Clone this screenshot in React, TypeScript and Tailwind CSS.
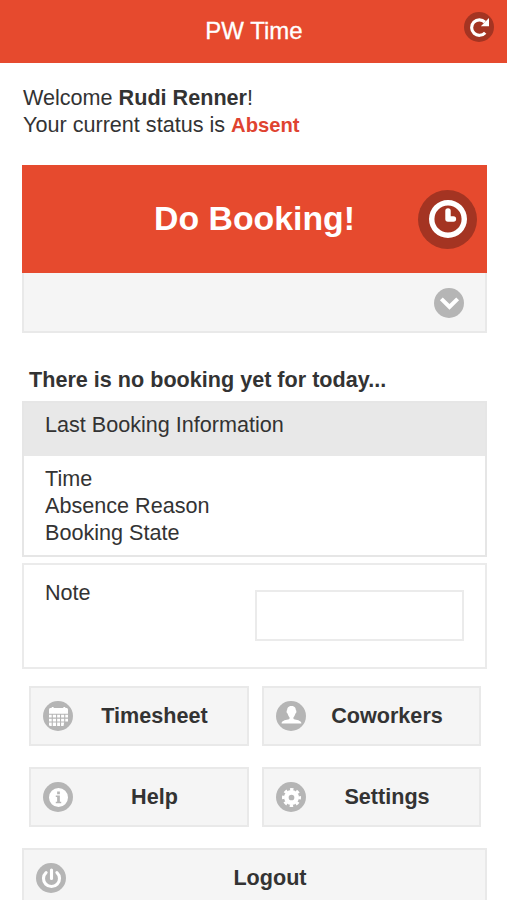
import React from 'react';

type IconName = 'refresh' | 'clock' | 'down' | 'calendar' | 'user' | 'info' | 'gear' | 'power';

const glyphs: Record<IconName, React.ReactNode> = {
  refresh: (
    <>
      <path d="M11.2 10.8A5.7 5.7 0 1 1 11 3.1" fill="none" stroke="currentColor" strokeWidth="2.3" />
      <path d="M14 0V6H8Z" />
    </>
  ),
  clock: (
    <path d="M7 0a7 7 0 1 0 0 14A7 7 0 0 0 7 0zM7 12A5 5 0 1 1 7 2a5 5 0 0 1 0 10zM9 6H8V4a1 1 0 0 0-2 0v3a1 1 0 0 0 1 1h2a1 1 0 0 0 0-2z" />
  ),
  down: <path d="M11.95 2.5 7 7.4 2.05 2.5 -0.05 4.6 7 11.6 14.05 4.6Z" />,
  calendar: (
    <path
      fillRule="evenodd"
      d="M0 2C0 1.100.5.7 1.200.7H2V0h1.400v.7h7.200V0H12v.7h.8c.7 0 1.200.5 1.200 1.300V5H0zM0 5.800h2v2H0zM2.800 5.800h2.400v2H2.800zM6 5.800h2.100v2H6zM8.900 5.800h2.300v2H8.900zM12 5.800h2v2h-2zM0 8.600h2v2H0zM2.800 8.600h2.400v2H2.800zM6 8.600h2.100v2H6zM8.900 8.600h2.300v2H8.900zM12 8.600h2v2h-2zM0 11.400h2V14H1a1 1 0 0 1-1-1zM2.800 11.400h2.400V14H2.800zM6 11.400h2.100V14H6zM8.900 11.400h2.300L10.700 14H8.900z"
    />
  ),
  user: (
    <path d="M8.9 9.1c-.5-.1-.5-1.4-.5-1.4s1.2-1.2 1.5-2.9c.8 0 1-1.9.3-2.5C10.2 1.3 9.8-.7 7-.7S3.8 1.3 3.8 2.3c-.7.6-.5 2.5.3 2.5.3 1.7 1.5 2.9 1.5 2.9s0 1.3-.5 1.4C3.6 9.4-.3 10-.3 12.1h14.6c0-2.1-3.9-2.7-5.4-3z" />
  ),
  info: (
    <path
      fillRule="evenodd"
      d="M7 0a7 7 0 1 0 0 14A7 7 0 0 0 7 0zM6 2.6h2v2H6zM5 5.6h3v4.6h1v1H5v-1h1V6.6H5z"
    />
  ),
  gear: (
    <g fill="none" stroke="currentColor">
      <circle cx="7" cy="7" r="3.8" strokeWidth="3.4" />
      <circle cx="7" cy="7" r="6" strokeWidth="2" strokeDasharray="2.5 2.212" strokeDashoffset="1.25" />
    </g>
  ),
  power: (
    <g fill="none" stroke="currentColor" strokeWidth="2.3" strokeLinecap="round">
      <path d="M7 0.8v6.2" />
      <path d="M3 2.7A5.9 5.9 0 1 0 11 2.7" />
    </g>
  ),
};

const Glyph: React.FC<{ name: IconName; className: string }> = ({ name, className }) => (
  <svg viewBox="0 0 14 14" fill="currentColor" className={`overflow-visible ${className}`}>
    {glyphs[name]}
  </svg>
);

const Disc: React.FC<{ name: IconName }> = ({ name }) => (
  <span className="flex size-[30px] shrink-0 items-center justify-center rounded-full bg-[#b5b5b5] text-white">
    <Glyph name={name} className="size-[19px]" />
  </span>
);

const MenuButton: React.FC<{ icon: IconName; label: string }> = ({ icon, label }) => (
  <button className="flex h-[60px] w-full items-center border-2 border-[#e9e9e9] bg-[#f5f5f5] pl-3 pr-[11px] font-bold">
    <Disc name={icon} />
    <span className="flex-1 pb-px text-center">{label}</span>
  </button>
);

const App: React.FC = () => {
  return (
    <div className="h-[900px] w-full overflow-hidden bg-white font-['Liberation_Sans',Arial,sans-serif] text-[21.6px] leading-[27px] text-[#333333]">
      <header className="grid h-[63px] grid-cols-[1fr_auto_1fr] bg-[#e64a2e] text-white">
        <h1 className="col-start-2 pt-[17px] pl-px text-[24px] [-webkit-text-stroke:0.3px_white]">PW Time</h1>
        <button className="mt-3 mr-[13px] flex size-[30px] items-center justify-center justify-self-end rounded-full bg-[#a43422]">
          <Glyph name="refresh" className="size-[19px]" />
        </button>
      </header>

      <main className="px-[22px] pt-[21px]">
        <p className="pl-px">
          Welcome <b>Rudi Renner</b>!
        </p>
        <p className="pl-px">
          Your current status is <b className="text-[20.2px] leading-none text-[#df4330]">Absent</b>
        </p>

        <section className="mt-[27px] w-[465px]">
          <button className="flex h-[108px] w-full items-center bg-[#e64a2e] pr-[10px] pl-[22px] font-bold text-white">
            <span className="flex-1 pb-px pl-[47px] text-center text-[33.8px]">Do Booking!</span>
            <span className="flex size-[59px] items-center justify-center rounded-full bg-[#a43422]">
              <Glyph name="clock" className="size-[38px]" />
            </span>
          </button>
          <button className="flex h-[60px] w-full items-center justify-end border-2 border-t-0 border-[#e9e9e9] bg-[#f5f5f5] pt-[2px] pr-[21px]">
            <Disc name="down" />
          </button>
        </section>

        <h2 className="mt-[33px] pl-[7px] font-bold">There is no booking yet for today...</h2>

        <section className="mt-[8px] w-[465px] border-2 border-[#e6e6e6]">
          <h3 className="h-[53px] bg-[#e8e8e8] pt-2 pl-[21px]">Last Booking Information</h3>
          <ul className="h-[99px] pt-[9px] pl-[21px]">
            <li>Time</li>
            <li>Absence Reason</li>
            <li>Booking State</li>
          </ul>
        </section>

        <section className="mt-[6px] flex h-[106px] w-[465px] justify-between border-2 border-[#ebebeb] pr-[21px] pl-[21px]">
          <label htmlFor="note" className="pt-[14px]">Note</label>
          <input id="note" type="text" className="mt-[25px] h-[51px] w-[209px] border-2 border-[#ebebeb] px-2 outline-none" />
        </section>

        <nav className="mt-[17px] w-[465px]">
          <div className="grid grid-cols-[220px_219px] gap-x-[13px] gap-y-[21px] pl-[7px]">
            <MenuButton icon="calendar" label="Timesheet" />
            <MenuButton icon="user" label="Coworkers" />
            <MenuButton icon="info" label="Help" />
            <MenuButton icon="gear" label="Settings" />
          </div>
          <div className="mt-[21px]">
            <MenuButton icon="power" label="Logout" />
          </div>
        </nav>
      </main>
    </div>
  );
};

export default App;
